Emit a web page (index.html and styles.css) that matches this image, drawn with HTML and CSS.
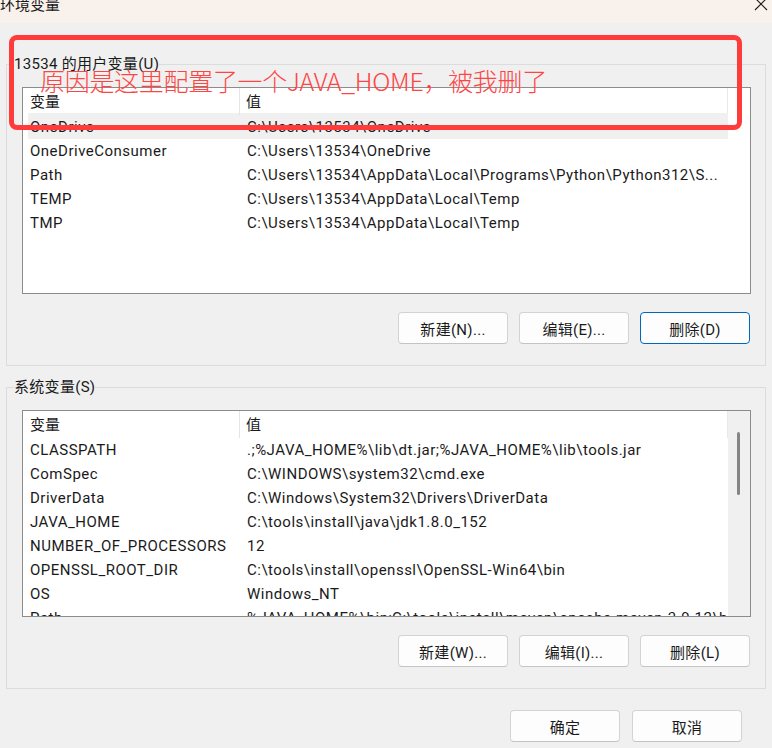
FILE: index.html
```html
<!DOCTYPE html>
<html lang="zh-CN">
<head>
  <meta charset="UTF-8">
  <title>环境变量</title>
  <link rel="stylesheet" href="styles.css">
</head>
<body>
  <div class="titlebar">
    <span class="title">环境变量</span>
    <svg class="close" width="12" height="10" viewBox="0 0 12 10">
      <path d="M0 -2 L12 10 M12 -2 L0 10" stroke="#1a1a1a" stroke-width="1.1" fill="none"/>
    </svg>
  </div>

  <fieldset class="group">
    <legend>13534 的用户变量(U)</legend>
    <div class="list user-list">
      <div class="cols">
        <div class="head">
          <div class="head-name">变量</div>
          <div class="head-value">值</div>
        </div>
        <div class="row selected"><span>OneDrive</span><span>C:\Users\13534\OneDrive</span></div>
        <div class="row"><span>OneDriveConsumer</span><span>C:\Users\13534\OneDrive</span></div>
        <div class="row"><span>Path</span><span>C:\Users\13534\AppData\Local\Programs\Python\Python312\S...</span></div>
        <div class="row"><span>TEMP</span><span>C:\Users\13534\AppData\Local\Temp</span></div>
        <div class="row"><span>TMP</span><span>C:\Users\13534\AppData\Local\Temp</span></div>
      </div>
    </div>
    <div class="buttons">
      <button>新建(N)...</button>
      <button>编辑(E)...</button>
      <button class="default">删除(D)</button>
    </div>
  </fieldset>

  <fieldset class="group system">
    <legend>系统变量(S)</legend>
    <div class="list sys-list">
      <div class="cols">
        <div class="head">
          <div class="head-name">变量</div>
          <div class="head-value">值</div>
        </div>
        <div class="row"><span>CLASSPATH</span><span>.;%JAVA_HOME%\lib\dt.jar;%JAVA_HOME%\lib\tools.jar</span></div>
        <div class="row"><span>ComSpec</span><span>C:\WINDOWS\system32\cmd.exe</span></div>
        <div class="row"><span>DriverData</span><span>C:\Windows\System32\Drivers\DriverData</span></div>
        <div class="row"><span>JAVA_HOME</span><span>C:\tools\install\java\jdk1.8.0_152</span></div>
        <div class="row"><span>NUMBER_OF_PROCESSORS</span><span>12</span></div>
        <div class="row"><span>OPENSSL_ROOT_DIR</span><span>C:\tools\install\openssl\OpenSSL-Win64\bin</span></div>
        <div class="row"><span>OS</span><span>Windows_NT</span></div>
        <div class="row"><span>Path</span><span>%JAVA_HOME%\bin;C:\tools\install\maven\apache-maven-3.9.12\bin;C...</span></div>
      </div>
      <div class="scrollbar"><div class="thumb"></div></div>
    </div>
    <div class="buttons">
      <button>新建(W)...</button>
      <button>编辑(I)...</button>
      <button>删除(L)</button>
    </div>
  </fieldset>

  <div class="footer">
    <button>确定</button>
    <button>取消</button>
  </div>

  <!-- annotation drawn over the screenshot -->
  <div class="mark">原因是这里配置了一个JAVA_HOME，被我删了</div>
</body>
</html>
```

FILE: styles.css
```css
body {
  margin: 0;
  font-family: Roboto, "Noto Sans CJK SC", sans-serif;
  font-size: 15px;
  color: #1a1a1a;
  background-color: #f0f0f0;
  height: 748px;
  overflow: hidden;
  position: relative;
}

.titlebar {
  height: 23px;
  background-color: #f9f1ec;
  display: flex;
  justify-content: space-between;
  align-items: flex-start;
}

.title {
  line-height: 11px;
}

.close {
  margin-right: 5px;
  overflow: visible;
}

.group {
  margin: 31px 6px 0 6px;
  padding: 12px 14px 21px 15px;
  border: 1px solid #dcdcdc;
  min-width: 0;
}

.group.system {
  margin-top: 11px;
  padding-top: 12px;
  padding-bottom: 21px;
}

legend {
  padding: 0;
  margin-left: -8px;
  line-height: 21px;
  letter-spacing: 0.3px;
  color: #1a1a1a;
}

.list {
  background-color: #fff;
  border: 1px solid #8c8c8c;
  height: 207px;
  box-sizing: border-box;
  display: flex;
  overflow: hidden;
}

.cols {
  width: 705px;
  flex: none;
}

.head {
  display: flex;
  height: 27px;
  padding-top: 2px;
  line-height: 25px;
  border-right: 1px solid #e8e8e8;
  box-sizing: border-box;
}

.head-name {
  width: 217px;
  padding-left: 7px;
  box-sizing: border-box;
  border-right: 1px solid #e5e5e5;
  margin-top: -2px;
  padding-top: 2px;
}

.head-value {
  padding-left: 6px;
}

.row {
  display: grid;
  grid-template-columns: 217px 1fr;
  margin-left: 5px;
  padding-left: 2px;
  height: 24px;
  line-height: 24px;
  letter-spacing: 0.5px;
  white-space: nowrap;
  overflow: hidden;
}

.row span {
  overflow: hidden;
}

.row.selected {
  background-color: #f0f0f0;
  margin-top: -2px;
  height: 26px;
  line-height: 28px;
}

.scrollbar {
  flex: 1;
  background-color: #f0f0f0;
  padding: 21px 0 0 9px;
}

.thumb {
  width: 3px;
  height: 63px;
  border-radius: 2px;
  background-color: #858585;
}

.buttons {
  display: flex;
  justify-content: flex-end;
  gap: 11px;
  margin-top: 18px;
  padding-right: 1px;
}

button {
  width: 110px;
  height: 32px;
  background-color: #fdfdfd;
  border: 1px solid #d3d3d3;
  border-bottom-color: #c4c4c4;
  border-radius: 4px;
  font-family: Roboto, "Noto Sans CJK SC", sans-serif;
  font-size: 15px;
  letter-spacing: 0.3px;
  color: #1a1a1a;
  padding: 0;
}

button.default {
  border: 1px solid #0067c0;
}

.footer {
  display: flex;
  justify-content: flex-end;
  gap: 12px;
  margin-top: 21px;
  padding-right: 30px;
}

.mark {
  position: absolute;
  left: 9px;
  top: 35px;
  width: 733px;
  height: 95px;
  box-sizing: border-box;
  border: 5px solid #ff3b3b;
  border-radius: 8px;
  padding: 25px 0 0 26px;
  font-family: "Noto Sans CJK SC", sans-serif;
  font-weight: 300;
  font-size: 25px;
  line-height: 30px;
  letter-spacing: -0.3px;
  color: #ff4444;
}
```
